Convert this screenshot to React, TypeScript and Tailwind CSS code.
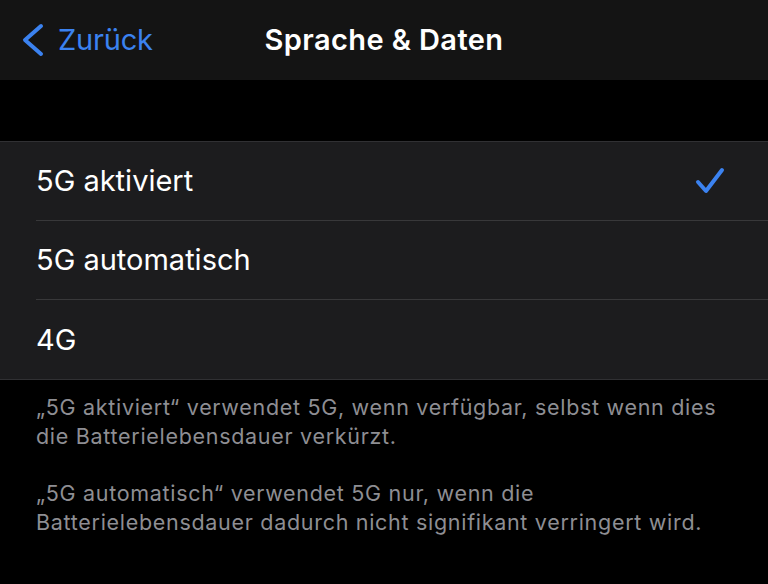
import { useState } from "react"

const options = ["5G aktiviert", "5G automatisch", "4G"]

function Chevron() {
  return (
    <svg width="24" height="34" viewBox="0 0 24 34" fill="none" className="shrink-0">
      <path d="M20 3 L4 17 L20 31" stroke="#3b82f0" strokeWidth="4" strokeLinecap="round" strokeLinejoin="round" />
    </svg>
  )
}

function Check() {
  return (
    <svg width="32" height="28" viewBox="0 0 32 28" fill="none">
      <path d="M4 15 L12 24 L28 3" stroke="#3b82f0" strokeWidth="4" strokeLinecap="round" strokeLinejoin="round" />
    </svg>
  )
}

export default function App() {
  const [selected, setSelected] = useState(0)

  return (
    <div className="h-[584px] w-[768px] overflow-hidden bg-black font-['Inter','Noto_Sans',sans-serif] antialiased">
      <header className="relative flex h-[80px] items-center bg-[#141414]">
        <button className="flex items-center gap-[13px] pl-[21px] text-[29px] tracking-[-0.2px] text-[#3b82f0]">
          <Chevron />
          Zurück
        </button>
        <h1 className="absolute left-1/2 -translate-x-1/2 text-[29px] font-semibold tracking-[0.4px] text-white">
          Sprache &amp; Daten
        </h1>
      </header>

      <div className="h-[61px]" />

      <ul className="border-y border-[#303033] bg-[#1c1c1e]">
        {options.map((label, i) => (
          <li key={label} onClick={() => setSelected(i)} className="pl-[36px]">
            <div
              className={
                "flex h-[79px] items-center justify-between pr-[42px] " +
                (i < options.length - 1 ? "border-b border-[#38383a]" : "")
              }
            >
              <span className="text-[29px] text-white">{label}</span>
              {selected === i && <Check />}
            </div>
          </li>
        ))}
      </ul>

      <div className="space-y-[28px] px-[36px] pt-[13px] text-[21.5px] leading-[29px] tracking-[0.7px] text-[#8e8e93]">
        <p>„5G aktiviert“ verwendet 5G, wenn verfügbar, selbst wenn dies die Batterielebensdauer verkürzt.</p>
        <p>„5G automatisch“ verwendet 5G nur, wenn die Batterielebensdauer dadurch nicht signifikant verringert wird.</p>
      </div>
    </div>
  )
}
